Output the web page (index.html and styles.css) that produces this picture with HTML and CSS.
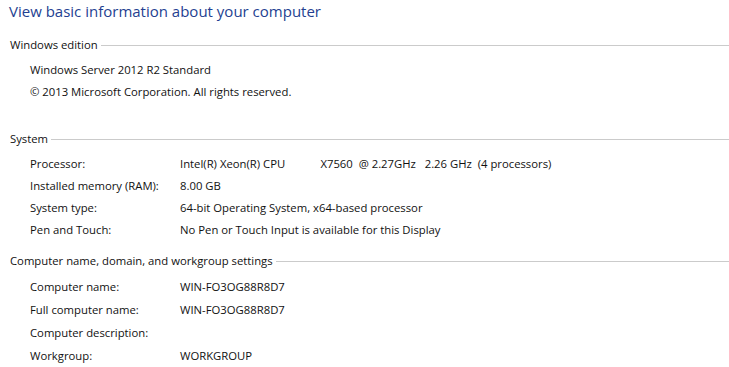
FILE: index.html
```html
<!DOCTYPE html>
<html>
<head>
<meta charset="utf-8">
<link rel="stylesheet" href="styles.css">
</head>
<body>
<div class="page">
  <h1 class="title">View basic information about your computer</h1>

  <section class="group group-edition">
    <div class="group-head"><span class="group-name">Windows edition</span><span class="rule"></span></div>
    <div class="lines">
      <div class="line">Windows Server 2012 R2 Standard</div>
      <div class="line">© 2013 Microsoft Corporation. All rights reserved.</div>
    </div>
  </section>

  <section class="group group-system">
    <div class="group-head"><span class="group-name">System</span><span class="rule"></span></div>
    <div class="props">
      <div class="label">Processor:</div><div class="value pre">Intel(R) Xeon(R) CPU            X7560  @ 2.27GHz   2.26 GHz  (4 processors)</div>
      <div class="label">Installed memory (RAM):</div><div class="value">8.00 GB</div>
      <div class="label">System type:</div><div class="value">64-bit Operating System, x64-based processor</div>
      <div class="label">Pen and Touch:</div><div class="value">No Pen or Touch Input is available for this Display</div>
    </div>
  </section>

  <section class="group group-name-settings">
    <div class="group-head"><span class="group-name">Computer name, domain, and workgroup settings</span><span class="rule"></span></div>
    <div class="props props-name">
      <div class="label">Computer name:</div><div class="value">WIN-FO3OG88R8D7</div>
      <div class="label">Full computer name:</div><div class="value">WIN-FO3OG88R8D7</div>
      <div class="label">Computer description:</div><div class="value"></div>
      <div class="label">Workgroup:</div><div class="value">WORKGROUP</div>
    </div>
  </section>
</div>
</body>
</html>
```

FILE: styles.css
```css
html, body {
  margin: 0;
  padding: 0;
  background: #ffffff;
}

.page {
  font-family: "Open Sans", "Noto Sans", "Liberation Sans", sans-serif;
  font-size: 11.3px;
  color: #111111;
  padding: 0 0 0 10px;
}

.title {
  margin: 0 0 0 -1px;
  padding: 1px 0 0 0;
  font-size: 15px;
  font-weight: normal;
  color: #243f91;
  line-height: 20px;
}

.group-head {
  display: flex;
  align-items: center;
  height: 22px;
}

.group-name {
  white-space: nowrap;
  line-height: 22px;
}

.rule {
  flex: 1;
  height: 1px;
  background: #cbcbcb;
  margin-left: 3px;
  margin-top: 1px;
}

.group-edition {
  margin-top: 13px;
}

.lines {
  padding-left: 20px;
  padding-top: 3px;
}

.line {
  line-height: 22px;
}

.group-system {
  margin-top: 25px;
}

.group-name-settings {
  margin-top: 10px;
}

.props {
  display: grid;
  grid-template-columns: 150px 1fr;
  grid-auto-rows: 22px;
  padding-left: 20px;
  padding-top: 2px;
  align-items: center;
}

.props-name {
  grid-auto-rows: 23px;
  padding-top: 3px;
}

.pre {
  white-space: pre;
}
```
